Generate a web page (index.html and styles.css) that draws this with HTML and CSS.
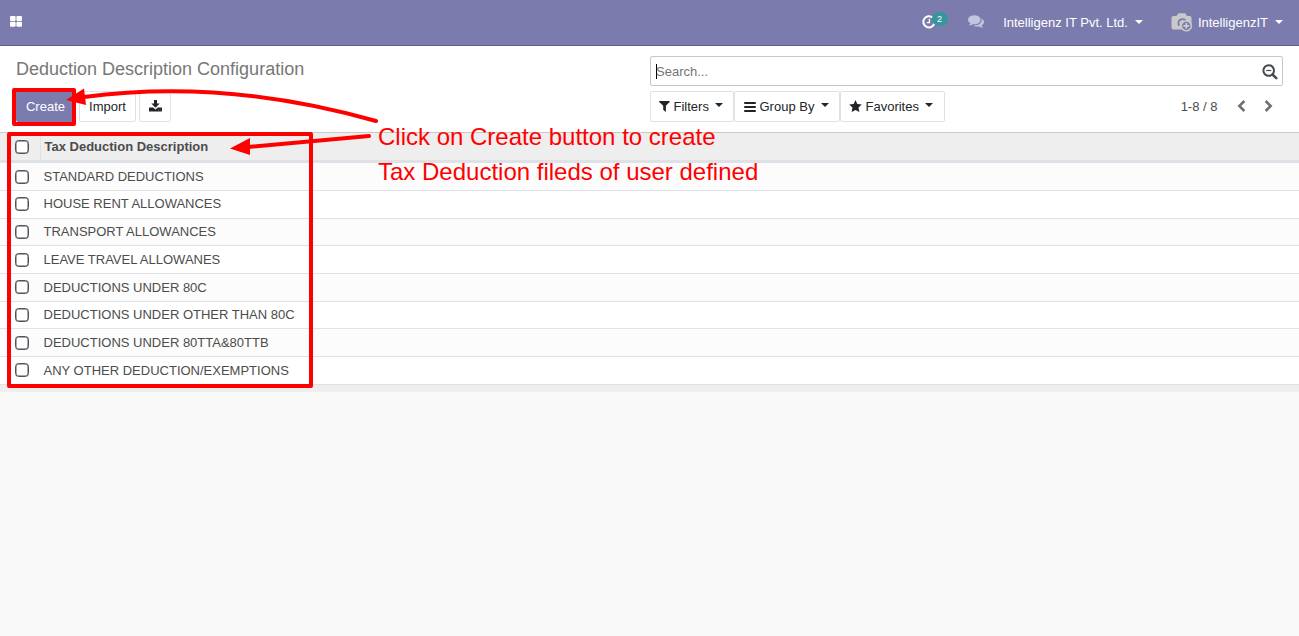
FILE: index.html
```
<!DOCTYPE html>
<html lang="en">
<head>
<meta charset="utf-8">
<title>Deduction Description Configuration</title>
<link rel="stylesheet" href="styles.css">
</head>
<body>
<header class="navbar">
  <svg class="apps" width="12" height="11" viewBox="0 0 12 11" fill="#fff"><rect width="5.6" height="5" rx="1"/><rect x="6.4" width="5.6" height="5" rx="1"/><rect y="5.8" width="5.6" height="5" rx="1"/><rect x="6.4" y="5.8" width="5.6" height="5" rx="1"/></svg>
  <div class="activity">
    <svg width="14" height="14" viewBox="0 0 14 14" fill="none" stroke="#fff"><path d="M10.6 2.6A5.6 5.6 0 1 0 12.3 8.6" stroke-width="2"/><path d="M7.4 3.8V7.6H4.8" stroke-width="1.3"/></svg>
    <span class="badge">2</span>
  </div>
  <svg class="chat" width="16" height="14" viewBox="0 0 1792 1536" fill="#c5c4de"><path d="M1408 512q0 139-94 257t-256.500 186.500-353.500 68.500q-86 0-176-16-124 88-278 128-36 9-86 16h-3q-11 0-20.500-8t-11.500-21q-1-3-1-6.500t.5-6.500 2-6l2.500-5 3.500-5.500 4-5 4.500-5 4-4.500q5-6 23-25t26-29.500 22.500-29 25-38.500 20.500-44q-124-72-195-177t-71-224q0-139 94-257t256.500-186.500 353.500-68.500 353.500 68.500 256.500 186.500 94 257zm384 256q0 120-71 224.500t-195 176.500q10 24 20.500 44t25 38.500 22.500 29 26 29.500 23 25q1 1 4 4.500t4.500 5 4 5 3.500 5.500l2.500 5 2 6 .5 6.500-1 6.500q-3 14-13 22t-22 7q-50-7-86-16-154-40-278-128-90 16-176 16-271 0-472-132 58 4 88 4 161 0 309-45t264-129q125-92 192-212t67-254q0-77-23-152 129 71 204 178t75 230z"/></svg>
  <span class="company">Intelligenz IT Pvt. Ltd.</span><i class="caret"></i>
  <svg class="camera" width="22" height="19" viewBox="0 0 22 19"><path d="M2.500 3H5.500L7 .8Q7.300.3 8 .3H13.600Q14.200.3 14.600.8L16 3H18.500Q20.500 3 20.500 5V14.500Q20.500 16.500 18.500 16.500H2.500Q.5 16.500.5 14.500V5Q.5 3 2.500 3Z" fill="#c9c9c9"/><path d="M8.300 12.700A4 4 0 1 1 14.500 7.600" fill="none" stroke="#7c7bad" stroke-width="1.800"/><circle cx="15.300" cy="12.900" r="5.700" fill="#c9c9c9"/><circle cx="15.300" cy="12.900" r="4.200" fill="#7c7bad"/><path d="M15.300 10V15.800M12.400 12.900H18.200" stroke="#d0d0d0" stroke-width="1.600"/></svg>
  <span>IntelligenzIT</span><i class="caret"></i>
</header>

<section class="panel">
  <div class="left">
    <h1>Deduction Description Configuration</h1>
    <div class="actions">
      <button class="btn primary">Create</button>
      <button class="btn import">Import</button>
      <button class="btn export"><svg width="13" height="12" viewBox="0 0 13 12" fill="#212529"><path d="M5 0H8V3.600H10.700L6.500 7.800 2.300 3.600H5Z"/><path d="M.6 7.500H4.100L6.500 9.600 8.900 7.500H12.400Q13 7.500 13 8.100V10.900Q13 11.500 12.400 11.500H.6Q0 11.500 0 10.900V8.100Q0 7.500.6 7.500ZM9 9.700V10.300H9.700V9.700ZM10.900 9.700V10.300H11.600V9.700Z" fill-rule="evenodd"/></svg></button>
    </div>
  </div>
  <div class="right">
    <div class="search"><i class="cursor"></i><span>Search...</span>
      <svg width="16" height="16" viewBox="0 0 16 16" fill="none" stroke="#444a50"><circle cx="6.700" cy="6.500" r="5.300" stroke-width="2"/><path d="M4.200 6.500H9.200" stroke-width="1.200"/><path d="M10.500 10.500L14.300 14.200" stroke-width="2.500" stroke-linecap="round"/></svg>
    </div>
    <div class="tools">
      <button class="btn filters"><svg width="11" height="11" viewBox="0 0 11 11" fill="#212529"><path d="M.4 0H10.300Q11 .3 10.600 1L6.900 4.800V10.400Q6.700 11 6.100 10.600L4.200 8.800V4.800L.2 1Q-.2.300.4 0Z"/></svg>Filters<i class="caret"></i></button>
      <button class="btn group"><svg width="12" height="10" viewBox="0 0 12 10" stroke="#212529" stroke-width="1.800" stroke-linecap="round"><path d="M.9 1H11.100M.9 5H11.100M.9 9H11.100"/></svg>Group By<i class="caret"></i></button>
      <button class="btn favorites"><svg width="13" height="12" viewBox="0 0 13 12" fill="#212529"><path d="M6.500 0L8.300 4 12.800 4.500 9.500 7.600 10.400 12 6.500 9.900 2.600 12 3.500 7.600.2 4.500 4.700 4Z"/></svg>Favorites<i class="caret"></i></button>
      <div class="pager"><span>1-8 / 8</span>
        <svg width="9" height="12" viewBox="0 0 9 12" fill="none" stroke="#6c7075" stroke-width="2.500"><path d="M7.400 1L2.300 6 7.400 11"/></svg>
        <svg width="9" height="12" viewBox="0 0 9 12" fill="none" stroke="#6c7075" stroke-width="2.500"><path d="M1.600 1L6.700 6 1.600 11"/></svg>
      </div>
    </div>
  </div>
</section>

<main class="list">
  <div class="head"><span class="pick"><i class="check"></i></span><b>Tax Deduction Description</b></div>
  <div class="rows">
    <div class="row"><i class="check"></i><span>STANDARD DEDUCTIONS</span></div>
    <div class="row"><i class="check"></i><span>HOUSE RENT ALLOWANCES</span></div>
    <div class="row"><i class="check"></i><span>TRANSPORT ALLOWANCES</span></div>
    <div class="row"><i class="check"></i><span>LEAVE TRAVEL ALLOWANES</span></div>
    <div class="row"><i class="check"></i><span>DEDUCTIONS UNDER 80C</span></div>
    <div class="row"><i class="check"></i><span>DEDUCTIONS UNDER OTHER THAN 80C</span></div>
    <div class="row"><i class="check"></i><span>DEDUCTIONS UNDER 80TTA&amp;80TTB</span></div>
    <div class="row"><i class="check"></i><span>ANY OTHER DEDUCTION/EXEMPTIONS</span></div>
  </div>
  <div class="foot"></div>
</main>

<svg class="marks" width="1299" height="636" viewBox="0 0 1299 636" fill="none" stroke="#f00" stroke-width="4">
  <rect x="14" y="90" width="60" height="34" stroke-linejoin="round"/>
  <rect x="9" y="134" width="302" height="252" stroke-linejoin="round"/>
  <path d="M84 97Q224 78 376 121" stroke-linecap="round"/>
  <path d="M66 100L84 88.500 86 105Z" fill="#f00" stroke="none"/>
  <path d="M248 147L369 136" stroke-linecap="round"/>
  <path d="M230 148.500L250 138V155Z" fill="#f00" stroke="none"/>
</svg>
<div class="note">Click on Create button to create<br>Tax Deduction fileds of user defined</div>
</body>
</html>
```
FILE: styles.css
```
* { box-sizing: border-box; }
body { margin: 0; height: 636px; overflow: hidden; position: relative; background: #f9f9f9; font: 13px/20px "Liberation Sans", Arial, sans-serif; color: #4c4c4c; }
svg { display: block; flex: none; }
.navbar { height: 46px; display: flex; align-items: center; padding: 0 16px 1px 10px; background: #7c7bad; border-bottom: 1px solid #5f5e97; color: #fff; }
.navbar > span { padding-top: 2px; }
.apps { margin-right: auto; margin-top: -1px; }
.activity { position: relative; width: 46px; margin-right: 1px; left: 1px; }
.badge { position: absolute; left: 10px; top: -3px; width: 16px; height: 14px; border-radius: 7px; background: #35979c; color: #fff; font-size: 9px; line-height: 14px; text-align: center; }
.chat { margin-right: 19.500px; }
.caret { flex: none; width: 0; height: 0; border: 4px solid transparent; border-top-color: currentColor; border-bottom: 0; margin-left: 7px; margin-top: -1px; }
.tools .caret { margin-top: -4px; margin-left: 6.500px; }
.camera { margin: 0 5px 0 28px; }
.panel { height: 87px; display: grid; grid-template-columns: 634px 633px; padding: 10px 16px 0; background: #fff; border-bottom: 1px solid #c8c9cb; }
h1 { margin: 0; height: 35px; font-size: 18px; line-height: 26px; font-weight: 400; color: #777; }
.actions, .tools { display: flex; }
.actions { gap: 3px; }
.btn { height: 31px; margin: 0; padding: 0; display: flex; align-items: center; justify-content: center; font: inherit; color: #212529; background: #fff; border: 1px solid #dee2e6; border-radius: 2px; }
.primary { width: 60px; padding-right: 1px; background: #7c7bad; border-color: #7c7bad; color: #fff; }
.import { width: 57px; }
.export { width: 32px; }
.search { height: 30px; margin-bottom: 5px; display: flex; align-items: center; padding: 0 5px; border: 1px solid #c4c6c8; border-radius: 2px; color: #757575; }
.search span { padding-top: 2px; }
.search svg { margin: 2px -.5px 0 auto; }
.cursor { width: 1px; height: 15px; margin-right: -1px; background: #000; }
.tools .btn { justify-content: flex-start; padding-left: 9px; }
.filters { width: 84px; }
.group { width: 106px; }
.favorites { width: 105px; }
.btn svg { margin-right: 3.500px; }
.filters svg { margin: 0 3.500px 0 -1px; }
.favorites svg { margin: -2px 3.500px 0 -1px; }
.export svg { margin: -2px 0 0; }
.pager { margin-left: auto; display: flex; align-items: center; padding-right: 10px; }
.pager span { margin-right: 19px; }
.pager svg { margin-top: -2px; }
.pager svg + svg { margin-left: 18.500px; }
.head { height: 30px; display: flex; align-items: stretch; background: #eee; border-bottom: 3px solid #dee2e6; }
.pick { width: 41px; padding: 7px 0 0 15px; border-right: 1px solid #dee2e6; }
.head b { padding: 4px 0 0 3.500px; }
.row { height: 28px; display: flex; align-items: flex-start; padding: 4px 0 0 15px; border-bottom: 1px solid #dee2e6; background: #fff; }
.row:nth-child(3n) { height: 27px; padding-top: 3px; }
.row:nth-child(2) { padding-top: 3px; }
.row:nth-child(odd) { background: #fcfcfc; }
.check { display: block; flex: none; width: 14px; height: 14px; border: 1.500px solid #505358; border-radius: 3.500px; background: #fff; box-shadow: inset 0 0 0 .5px #505358; }
.row .check { margin: 3px 14.500px 0 0; }
.row:nth-child(5) .check, .row:nth-child(8) .check { margin-top: 2px; }
.foot { height: 7px; background: #eee; }
.marks { position: absolute; left: 0; top: 0; }
.note { position: absolute; left: 378px; top: 119px; font-size: 24px; line-height: 35px; color: #f00; white-space: nowrap; }
```
